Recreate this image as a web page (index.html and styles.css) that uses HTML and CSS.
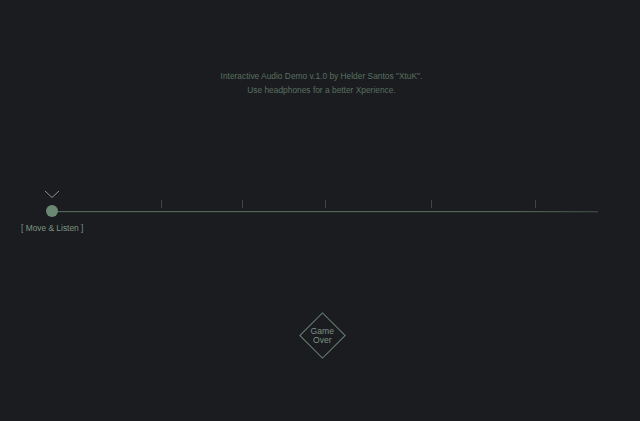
FILE: index.html
```html
<!DOCTYPE html>
<html>
<head>
<meta charset="utf-8">
<link rel="stylesheet" href="styles.css">
</head>
<body>
<div class="page">
  <header class="intro">
    <p class="line">Interactive Audio Demo v.1.0 by Helder Santos "XtuK".</p>
    <p class="line">Use headphones for a better Xperience.</p>
  </header>
  <section class="slider">
    <div class="track"></div>
    <span class="tick" style="left:161px"></span>
    <span class="tick" style="left:242px"></span>
    <span class="tick" style="left:325px"></span>
    <span class="tick" style="left:431px"></span>
    <span class="tick" style="left:535px"></span>
    <svg class="chevron" width="16" height="9" viewBox="0 0 16 9"><path d="M1 1 L8 7.5 L15 1" fill="none" stroke="#8a948e" stroke-width="1"/></svg>
    <span class="thumb"></span>
    <span class="label">[ Move &amp; Listen ]</span>
  </section>
  <div class="over-wrap">
    <div class="diamond"><span class="diamond-text">Game<br>Over</span></div>
  </div>
</div>
</body>
</html>
```
FILE: styles.css
```css
html, body {
  margin: 0;
  padding: 0;
  background: #1b1c1f;
  width: 640px;
  height: 421px;
  overflow: hidden;
}
.page {
  font-family: "Liberation Sans", Arial, sans-serif;
  display: flex;
  flex-direction: column;
}
.intro {
  padding-top: 69px;
  padding-left: 3px;
  text-align: center;
  color: #587061;
  font-size: 8.4px;
}
.line {
  margin: 0;
  line-height: 14px;
}
.slider {
  position: relative;
  height: 60px;
  margin-top: 87px;
}
.track {
  position: absolute;
  left: 52px;
  top: 27px;
  width: 546px;
  height: 1px;
  background: linear-gradient(to right, #4f6557, #4f6557 85%, #3a4240);
  box-shadow: 0 0.5px 0 rgba(79,101,87,0.4);
}
.tick {
  position: absolute;
  top: 16px;
  width: 1px;
  height: 8px;
  background: #3e4447;
}
.chevron {
  position: absolute;
  left: 44px;
  top: 6px;
}
.thumb {
  position: absolute;
  left: 46px;
  top: 21px;
  width: 12px;
  height: 12px;
  border-radius: 50%;
  background: #6b8872;
}
.label {
  position: absolute;
  left: 21px;
  top: 39px;
  font-size: 8.4px;
  color: #7c9284;
  white-space: nowrap;
}
.over-wrap {
  display: flex;
  justify-content: center;
  padding-left: 4px;
  margin-top: 75px;
}
.diamond {
  width: 31px;
  height: 31px;
  border: 1.2px solid #6a8372;
  transform: rotate(45deg);
  display: flex;
  align-items: center;
  justify-content: center;
}
.diamond-text {
  transform: rotate(-45deg);
  color: #7c9284;
  font-size: 8.6px;
  line-height: 9px;
  text-align: center;
}
```
